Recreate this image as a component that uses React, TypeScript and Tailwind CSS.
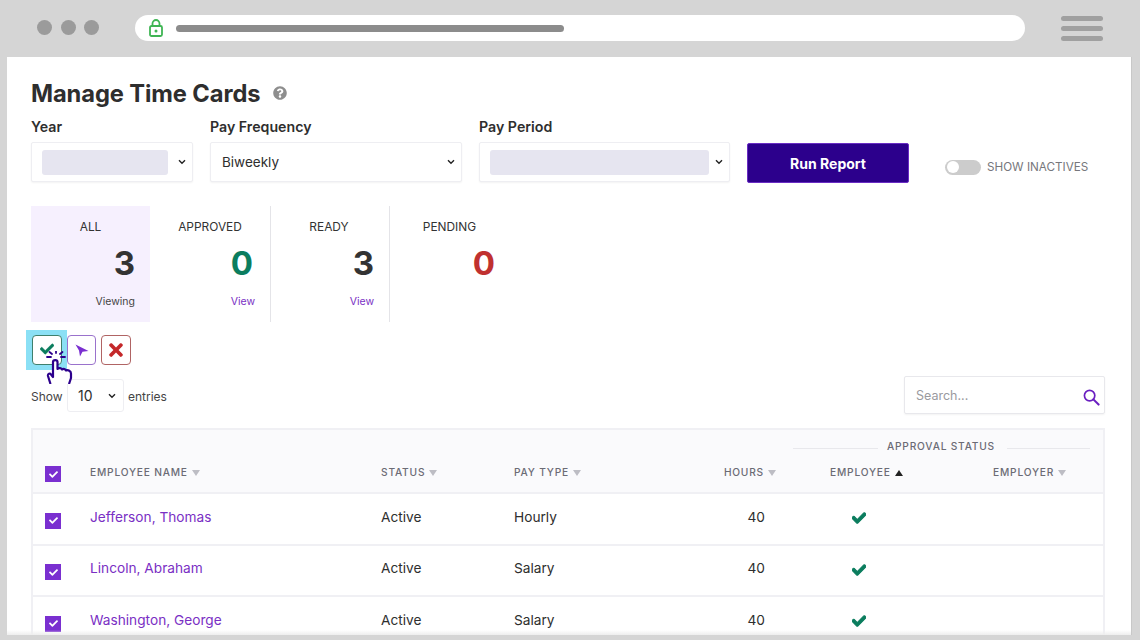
import React from "react";
import { FaCheck, FaTimes, FaQuestionCircle } from "react-icons/fa";

function Chevron() {
  return (
    <svg width="8" height="6" viewBox="0 0 8 6" className="shrink-0">
      <path d="M1 1.2 L4 4.2 L7 1.2" fill="none" stroke="#222" strokeWidth="1.4" />
    </svg>
  );
}

function Select({ width, children, fill }: { width: string; children?: React.ReactNode; fill?: string }) {
  return (
    <div className={`${width} h-10 flex items-center justify-between bg-white border border-[#eeeef2] rounded-[2px] shadow-[0_1px_2px_rgba(0,0,0,0.05)] pl-[10px] pr-[6px]`}>
      {fill ? <div className={`${fill} h-[25px] rounded-[3px] bg-[#e6e5f0]`} /> : children}
      <Chevron />
    </div>
  );
}

function Field({ label, children }: { label: string; children: React.ReactNode }) {
  return (
    <div className="flex flex-col">
      <div className="h-[25px] text-[14.2px] leading-[20px] font-semibold text-[#2e2e2e]">{label}</div>
      {children}
    </div>
  );
}

function Stat({ label, value, color, foot, width, numberPad, labelClass }: { label: string; value: string; color: string; foot?: string; width: string; numberPad: string; labelClass: string }) {
  return (
    <div className={`${width} h-[116px] flex flex-col pt-[13px]`}>
      <div className={`text-[11.9px] leading-[16px] text-[#333] ${labelClass}`}>{label}</div>
      <div className={`text-[33px] leading-[40px] font-bold mt-[8px] text-right ${numberPad} ${color}`}>{value}</div>
      {foot && (
        <div className={`text-[10.5px] leading-[14px] text-right pr-[15px] mt-[12px] ${foot === "View" ? "text-[#7a2fc4]" : "text-[#444]"}`}>{foot}</div>
      )}
    </div>
  );
}

function CheckBox() {
  return (
    <div className="w-4 h-4 bg-[#7a2fd0] flex items-center justify-center">
      <FaCheck className="text-white text-[9px]" />
    </div>
  );
}

function Head({ label, up }: { label: string; up?: boolean }) {
  return (
    <span className="inline-flex items-center gap-[4px] text-[10.2px] tracking-[0.8px] font-medium text-[#6b6b75]">
      {label}
      <svg width="8" height="6" viewBox="0 0 8 6">
        {up ? <path d="M0 6 L8 6 L4 0 Z" fill="#222" /> : <path d="M0 0 L8 0 L4 6 Z" fill="#bdbdc4" />}
      </svg>
    </span>
  );
}

const gridCols = "grid grid-cols-[57px_291px_133px_170px_92px_217px_1fr]";

function Row({ name, pay, h }: { name: string; pay: string; h: string }) {
  return (
    <div className={`${gridCols} ${h} items-center border-t-2 border-[#f0f0f4] pb-[4px] text-[13.7px] text-[#2e2e2e]`}>
      <div className="pl-[12px] pt-[7px]"><CheckBox /></div>
      <div className="text-[#7a2fc4]">{name}</div>
      <div>Active</div>
      <div>{pay}</div>
      <div className="text-right pr-[11px]">40</div>
      <div className="pl-[76px] pt-[2px]"><FaCheck className="text-[#0b7d5e] text-[14px] [stroke-width:40]" /></div>
      <div />
    </div>
  );
}

export default function App() {
  return (
    <div className="w-[1140px] h-[640px] overflow-hidden flex flex-col bg-[#d5d5d5] font-['Inter',sans-serif]">
      {/* browser chrome */}
      <div className="h-[57px] shrink-0 flex items-start pt-[15px] pl-[37px] pr-[37px]">
        <div className="flex gap-[8.5px] mt-[5px] w-[98px]">
          <div className="w-[15px] h-[15px] rounded-full bg-[#9b9b9b]" />
          <div className="w-[15px] h-[15px] rounded-full bg-[#9b9b9b]" />
          <div className="w-[15px] h-[15px] rounded-full bg-[#9b9b9b]" />
        </div>
        <div className="w-[890px] h-[26px] rounded-full bg-white flex items-center pl-[14px]">
          <svg width="14" height="18" viewBox="0 0 14 18">
            <path d="M3.5 7.5 V4.5 A3.5 3.5 0 0 1 10.5 4.5 V7.5" fill="none" stroke="#3fb554" strokeWidth="1.8" />
            <rect x="1" y="7" width="12" height="10" rx="1.5" fill="none" stroke="#3fb554" strokeWidth="1.8" />
            <circle cx="7" cy="12" r="1.5" fill="#3fb554" />
          </svg>
          <div className="ml-[13px] w-[388px] h-[7px] rounded-full bg-[#8c8c8c]" />
        </div>
        <div className="ml-[36px] w-[42px] flex flex-col gap-[5px] mt-[1px]">
          <div className="h-[5px] rounded-full bg-[#a0a0a0]" />
          <div className="h-[5px] rounded-full bg-[#a0a0a0]" />
          <div className="h-[5px] rounded-full bg-[#a0a0a0]" />
        </div>
      </div>

      {/* page */}
      <div className="relative ml-[7px] w-[1125px] h-[578px] shrink-0 bg-white overflow-hidden pl-[24px] pr-[26px] border-r border-[#c8c8c8]">
        <div className="flex items-center gap-[13px] h-[36px] mt-[19px]">
          <h1 className="text-[23.7px] leading-[36px] font-bold text-[#2e2e2e] tracking-[-0.1px]">Manage Time Cards</h1>
          <FaQuestionCircle className="text-[#8e8e8e] text-[14px] -mt-[3px]" />
        </div>

        <div className="flex items-start mt-[5px]">
          <Field label="Year">
            <Select width="w-[162px]" fill="w-[126px]" />
          </Field>
          <div className="ml-[17px]">
            <Field label="Pay Frequency">
              <Select width="w-[252px]"><span className="ml-[1px] text-[13.5px] text-[#2e2e2e]">Biweekly</span></Select>
            </Field>
          </div>
          <div className="ml-[17px]">
            <Field label="Pay Period">
              <Select width="w-[251px]" fill="w-[219px]" />
            </Field>
          </div>
          <button className="ml-[17px] mt-[26px] w-[162px] h-10 rounded-[2px] bg-[#2c008c] border border-[#6a2cc4] text-white text-[14px] font-bold">Run Report</button>
          <div className="ml-[36px] mt-[41px] flex items-center">
            <div className="w-9 h-[15px] rounded-full bg-[#cccccc] p-[1.5px]">
              <div className="w-3 h-3 rounded-full bg-white" />
            </div>
            <span className="ml-[6px] pt-[1px] text-[11.7px] text-[#77777c]">SHOW INACTIVES</span>
          </div>
        </div>

        <div className="flex mt-[23px]">
          <div className="bg-[#f6f0fe]">
            <Stat width="w-[119px]" numberPad="pr-[15px]" label="ALL" value="3" color="text-[#333333]" foot="Viewing" labelClass="text-center" />
          </div>
          <div className="border-r border-[#e4e4e8]">
            <Stat width="w-[120px]" numberPad="pr-[17px]" label="APPROVED" value="0" color="text-[#0b7d5e]" foot="View" labelClass="text-center" />
          </div>
          <div className="border-r border-[#e4e4e8]">
            <Stat width="w-[118px]" numberPad="pr-[15px]" label="READY" value="3" color="text-[#333333]" foot="View" labelClass="text-center pr-[2px]" />
          </div>
          <Stat width="w-[119px]" numberPad="pr-[14px]" label="PENDING" value="0" color="text-[#c0312f]" labelClass="text-center" />
        </div>

        {/* actions */}
        <div className="relative flex gap-[5px] mt-[13px] pl-[1px] h-[30px]">
          <div className="absolute left-[-5px] top-[-5px] w-[41px] h-[40px] bg-[#8be0f5]" />
          <div className="relative w-[30px] h-[30px] rounded-[4px] border border-[#3f7f6c] bg-white flex items-center justify-center pb-[3px]">
            <FaCheck className="text-[#0b7d5e] text-[14px] [stroke-width:15]" />
          </div>
          <div className="relative w-[29px] h-[30px] rounded-[4px] border border-[#9a72cc] bg-white flex items-center justify-center">
            <svg width="14" height="13" viewBox="0 0 14 13">
              <path d="M0.5 0.5 L13.5 7 L7.5 7.8 L5 12.5 L4 6.5 Z" fill="#7a2fd0" />
            </svg>
          </div>
          <div className="relative w-[30px] h-[30px] rounded-[4px] border border-[#b06464] bg-white flex items-center justify-center">
            <FaTimes className="text-[#c4282a] text-[20px]" />
          </div>
          <svg className="absolute left-[13px] top-[16px]" width="30" height="33" viewBox="0 0 30 33">
            <g stroke="#2c008c" strokeWidth="1.8" fill="none" strokeLinecap="round">
              <path d="M7 6 L3 6 M8 3 L5.5 1 M12 2 L12 0 M16 3 L18.5 1 M17 6 L21 6" />
            </g>
            <path d="M6.5 33 L4 25 C3.5 22.5 6 22 7 23.5 L9 26 L9 11 C9 8.5 13.5 8.5 13.5 11 L13.5 18 C15 16.5 17.5 17 18 18.5 C19.5 17.5 21.5 18 22 19.5 C24 18.5 27 20 27 22.5 L27 27 L25 33" fill="white" stroke="#2c008c" strokeWidth="2.2" strokeLinejoin="round" />
          </svg>
        </div>

        {/* show + search */}
        <div className="flex items-start justify-between mt-[11px] h-[38px]">
          <div className="flex items-center mt-[3px] text-[12px] text-[#444]">
            <span className="w-[36px] pt-[2px]">Show</span>
            <div className="w-[57px] h-[33px] flex items-center justify-between bg-white border border-[#eeeef2] rounded-[3px] pl-[10px] pr-[7px] text-[14px] text-[#2e2e2e]">
              10
              <Chevron />
            </div>
            <span className="ml-[4px] pt-[2px]">entries</span>
          </div>
          <div className="relative w-[201px] h-[38px] border border-[#e8e8ec] rounded-[2px] shadow-[0_1px_2px_rgba(0,0,0,0.05)] pl-[11px] pt-[11px] text-[12.5px] leading-[16px] text-[#9a9aa0]">
            Search...
            <svg className="absolute right-[4px] bottom-[7px]" width="17" height="17" viewBox="0 0 18 18">
              <circle cx="7" cy="7" r="5.5" fill="none" stroke="#6a1fc0" strokeWidth="1.8" />
              <path d="M11 11 L16.5 16.5" stroke="#6a1fc0" strokeWidth="2.2" strokeLinecap="round" />
            </svg>
          </div>
        </div>

        {/* table */}
        <div className="mt-[14px] border-x-2 border-t-2 border-[#f0f0f4] w-[1074px] text-[#2e2e2e]">
          <div className="bg-[#fafafc] h-[62px] flex flex-col">
            <div className="h-[26px] pt-[8px] pl-[760px] flex items-center">
              <div className="w-[85px] h-px bg-[#e8e8ec] mt-[3px]" />
              <span className="ml-[9px] text-[10.2px] tracking-[0.8px] font-medium text-[#6b6b75]">APPROVAL STATUS</span>
              <div className="ml-[12px] w-[83px] h-px bg-[#e8e8ec] mt-[3px]" />
            </div>
            <div className={`${gridCols} items-center h-[28px]`}>
              <div className="pl-[12px] pt-[8px]"><CheckBox /></div>
              <div><Head label="EMPLOYEE NAME" /></div>
              <div><Head label="STATUS" /></div>
              <div><Head label="PAY TYPE" /></div>
              <div className="text-right"><Head label="HOURS" /></div>
              <div className="pl-[54px]"><Head label="EMPLOYEE" up /></div>
              <div><Head label="EMPLOYER" /></div>
            </div>
          </div>
          <Row name="Jefferson, Thomas" pay="Hourly" h="h-[52px]" />
          <Row name="Lincoln, Abraham" pay="Salary" h="h-[51px]" />
          <Row name="Washington, George" pay="Salary" h="h-[52px]" />
        </div>
        <div className="absolute left-0 right-0 bottom-0 h-[5px] bg-gradient-to-b from-transparent to-[#eeeeee]" />
      </div>
    </div>
  );
}
